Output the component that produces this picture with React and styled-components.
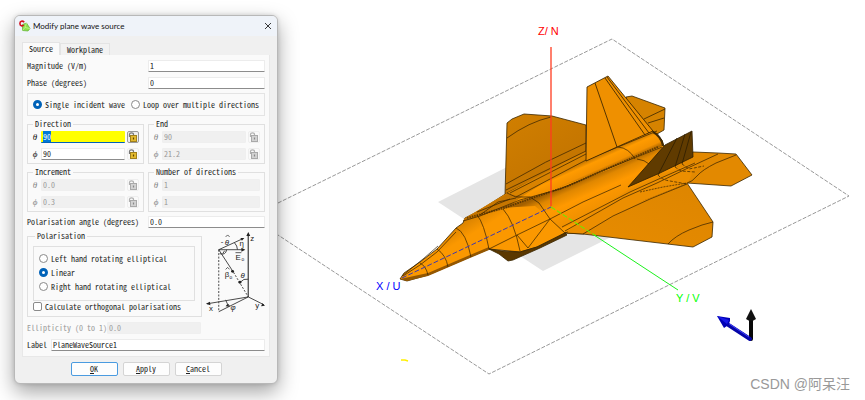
import React, { useEffect, useRef } from "react";
import styled, { createGlobalStyle, css } from "styled-components";

const mono = '"Noto Sans Mono CJK SC", "Liberation Mono", monospace';
const blue = "#0062b8";

const GlobalStyle = createGlobalStyle`
  *, *::before, *::after { box-sizing: border-box; }
  body { margin: 0; background: #fff; }
  button, input { font: inherit; color: inherit; margin: 0; }
`;

const Page = styled.main`
  display: flex;
  align-items: flex-start;
  position: relative;
  min-height: 100vh;
  overflow: hidden;
  font: 8px/8px ${mono};
  color: #222;
`;

const Dialog = styled.form`
  flex: 0 0 264px;
  margin: 15px 0 15px 14px;
  border: 1px solid #b8b8b8;
  border-radius: 6px;
  background: #f0f0f0;
  box-shadow: 0 8px 20px rgba(0, 0, 0, 0.36), 0 0 4px rgba(0, 0, 0, 0.14);
  z-index: 1;
`;

const TitleBar = styled.header`
  display: flex;
  align-items: center;
  gap: 2px;
  height: 20px;
  padding: 0 3px 0 4px;
  border-radius: 5px 5px 0 0;
  background: #eff3f9;
`;

const Title = styled.h1`
  flex: 1;
  margin: 0;
  font: 400 8px/12px Lato, sans-serif;
  color: #111;
`;

const CloseButton = styled.button`
  display: grid;
  place-items: center;
  width: 12px;
  height: 12px;
  padding: 0;
  border: 0;
  background: none;
`;

const Tabs = styled.div`
  display: flex;
  align-items: flex-end;
  padding: 6px 7px 0;
`;

const Tab = styled.button`
  height: ${(p) => (p.$active ? 13 : 12)}px;
  padding: 0 6px;
  border: 1px solid #e4e4e4;
  border-bottom: 0;
  background: ${(p) => (p.$active ? "#fafafa" : "#f2f2f2")};
`;

const Panel = styled.div`
  display: flex;
  flex-direction: column;
  gap: 4px;
  margin: 0 7px;
  padding: 5px 4px;
  border: 1px solid #e8e8e8;
  border-top: 0;
  background: #fafafa;
`;

const Stack = styled.div`
  display: flex;
  flex-direction: column;
  gap: 5px;
`;

const Columns = styled.div`
  display: grid;
  grid-template-columns: 1fr 1fr;
  gap: 4px;
`;

const FieldRow = styled.label`
  display: grid;
  grid-template-columns: ${(p) => p.$columns || "1fr 117px"};
  align-items: center;
  height: 12px;
  color: ${(p) => (p.$muted ? "#999" : "inherit")};
`;

const TextField = styled.input`
  width: 100%;
  min-width: 0;
  height: 12px;
  padding: 0 1px 2px;
  border: 1px solid #ececec;
  border-bottom-color: #8c8c8c;
  border-radius: 1px;
  background: #fff;
  outline: 0;
  &:disabled {
    border-color: #efefef;
    background: #f0f0f0;
    color: #999;
  }
  ${(p) =>
    p.$current &&
    css`
      border: 0;
      border-bottom: 1px solid ${blue};
      padding: 0 2px 1px;
      background: #ff0;
    `}
  &::selection {
    background: #0078d7;
    color: #fff;
  }
`;

const ChoiceBar = styled.div`
  display: flex;
  align-items: center;
  gap: 6px;
  height: 23px;
  padding: 0 5px;
  border: 1px solid #e4e4e4;
`;

const ChoiceBox = styled.div`
  display: flex;
  flex-direction: column;
  justify-content: center;
  gap: 5px;
  height: 55px;
  padding: 0 5px 2px;
  border: 1px solid #e0e0e0;
`;

const Choice = styled.label`
  display: flex;
  align-items: center;
  gap: 3px;
  height: 9px;
  white-space: nowrap;
`;

const Radio = styled.input.attrs({ type: "radio" })`
  appearance: none;
  flex: none;
  width: 9px;
  height: 9px;
  border: 1px solid #8a8a8a;
  border-radius: 50%;
  background: #fff;
  &:checked {
    border: 3px solid ${blue};
  }
`;

const Check = styled.input.attrs({ type: "checkbox" })`
  appearance: none;
  flex: none;
  width: 9px;
  height: 9px;
  border: 1px solid #8a8a8a;
  border-radius: 2px;
  background: #fff;
`;

const Group = styled.fieldset`
  min-width: 0;
  margin: 0;
  padding: ${(p) => (p.$roomy ? "6px 6px 5px 5px" : "3px 4px 3px 3px")};
  border: 1px solid #e0e0e0;
`;

const Legend = styled.legend`
  height: 8px;
  margin-left: 2px;
  padding: 0 2px;
`;

const AngleRow = styled.div`
  display: flex;
  align-items: center;
  gap: 2px;
  height: 12px;
`;

const Symbol = styled.label`
  flex: 0 0 8px;
  text-align: center;
  font: italic 9px/12px "Liberation Serif", serif;
  color: ${(p) => (p.$muted ? "#888" : "#111")};
`;

const LockButton = styled.button`
  display: grid;
  place-items: center;
  flex: 0 0 12px;
  height: 12px;
  padding: 0;
  border: 1px solid ${(p) => (p.$current ? "#999" : "#eee")};
  border-radius: 2px;
  background: ${(p) => (p.$current ? "#eee" : "none")};
`;

const PolarisationRow = styled.div`
  display: grid;
  grid-template-columns: 175px 1fr;
  gap: 2px;
  margin-bottom: 1px;
`;

const PolarChoices = styled.div`
  display: flex;
  flex-direction: column;
  gap: 1px;
`;

const Actions = styled.footer`
  display: flex;
  justify-content: center;
  gap: 5px;
  padding: 5px 0 7px;
`;

const ActionButton = styled.button`
  width: 47px;
  height: 14px;
  padding: 0;
  border: 1px solid ${(p) => (p.$primary ? "#4a9be0" : "#d4d4d4")};
  border-radius: 2px;
  background: #fdfdfd;
`;

const Scene = styled.svg`
  display: block;
  flex: 1 1 0;
  min-width: 0;
  height: auto;
`;

const Watermark = styled.span`
  position: absolute;
  right: 15px;
  bottom: 6px;
  z-index: 2;
  font: 14px/20px "Liberation Sans", "Noto Sans CJK SC", sans-serif;
  color: #999;
`;

function AppIcon() {
  return (
    <svg width="12" height="12" viewBox="0 0 12 12" aria-hidden="true">
      <path d="M3.5 4.5 7.5 3 11 8.500 9 11 3.500 10.500Z" fill="#8ee04a" stroke="#5fae35" strokeWidth=".7" />
      <path d="M7.500 3 6 7.500 11 8.500M6 7.500 3.500 10.500" fill="none" stroke="#c4f58f" strokeWidth=".8" />
      <path d="M5.200 2.300C3.500.3.900 1.100.900 3.500S3.500 6.600 4.700 4.900" fill="none" stroke="#d41420" strokeWidth="1.600" />
    </svg>
  );
}

function Lock({ muted }) {
  return (
    <svg width="10" height="10" viewBox="0 0 10 10" aria-hidden="true">
      <path d="M1.500 5V2.200Q1.500.8 3.500.8T5.500 2.500V4" fill="none" stroke={muted ? "#b0b0b0" : "#777"} strokeWidth="1.200" />
      <rect x="2.500" y="3.500" width="6" height="6" fill={muted ? "#d2d2d2" : "#e3b92e"} stroke={muted ? "#a9a9a9" : "#a0801c"} />
      <path d="M5.500 5.500v2" stroke={muted ? "#888" : "#5b4300"} strokeWidth="1.200" />
    </svg>
  );
}

function Angle({ name, symbol, value, disabled, lock = true, current }) {
  const ref = useRef(null);
  useEffect(() => {
    if (current) {
      ref.current.focus();
      ref.current.select();
    }
  }, [current]);
  return (
    <AngleRow>
      <Symbol htmlFor={name} $muted={disabled}>{symbol}</Symbol>
      <TextField id={name} ref={ref} defaultValue={value} disabled={disabled} $current={current} />
      {lock && (
        <LockButton type="button" aria-label={`Lock ${name}`} disabled={disabled} $current={current}>
          <Lock muted={disabled} />
        </LockButton>
      )}
    </AngleRow>
  );
}

function AngleGroup({ title, id, values, ...rest }) {
  return (
    <Group>
      <Legend>{title}</Legend>
      <Stack>
        <Angle name={`${id}-theta`} symbol="θ" value={values[0]} {...rest} />
        <Angle name={`${id}-phi`} symbol="ϕ" value={values[1]} {...rest} current={false} />
      </Stack>
    </Group>
  );
}

function WaveDiagram() {
  return (
    <svg width="100%" viewBox="203 235 62 84" aria-label="Plane wave angles">
      <g fill="none" stroke="#333" strokeWidth=".9">
        <path d="M248 301V237" stroke="#555" strokeWidth="1.400" />
        <path d="M218 253 242 242M218 253H243M218 253 233 276M248 301 206 308M248 301 264 309M248 301 218 316" />
        <path d="M233 276 248 301M218 253V316" strokeDasharray="2 1.500" />
        <path d="M234 246Q237 249 237 253M219 257Q225 259 226 253M222 257 224 254M240 286Q243 282 248 283M225 304Q226 308 229 310" />
      </g>
      <g fill="#222">
        <path d="m248 235 2 4h-4ZM244 241l-4 .2 1.500 2.800ZM245 253l-4-2v4ZM205 308l4-2 .5 3.500ZM265 310l-4 .4 1.400-3Z" />
        <circle cx="232" cy="275" r="1.500" />
        <circle cx="239.500" cy="286" r="1.500" />
        <path d="m229 311-4-.5 2-2.500Z" />
      </g>
      <g fill="#222" fontFamily="Liberation Sans" fontSize="8">
        <text x="250" y="244">z</text>
        <text x="220" y="247">-</text>
        <text x="224" y="248" fontStyle="italic">θ</text>
        <text x="239" y="249">η</text>
        <text x="235" y="263">E</text>
        <text x="241" y="264" fontSize="5">o</text>
        <text x="224" y="281">β</text>
        <text x="229" y="283" fontSize="5">o</text>
        <text x="240" y="282" fontStyle="italic">θ</text>
        <text x="208" y="315">x</text>
        <text x="230" y="314" fontStyle="italic">φ</text>
        <text x="255" y="312">y</text>
      </g>
      <path d="m225 240 2-2 2 2M225 273l2-2 2 2M235 256h6" fill="none" stroke="#333" strokeWidth=".8" />
    </svg>
  );
}

function AircraftScene() {
  return (
    <Scene viewBox="278 0 587 400" role="img" aria-label="Aircraft model with plane wave axes">
      <defs>
        <linearGradient id="farWing" x1="0" y1="0" x2=".6" y2="1">
          <stop offset="0" stopColor="#d17f00" />
          <stop offset="1" stopColor="#c07200" />
        </linearGradient>
        <linearGradient id="wing" x1="0" y1="1" x2="1" y2="0">
          <stop offset="0" stopColor="#e88c00" />
          <stop offset="1" stopColor="#dd8500" />
        </linearGradient>
        <linearGradient id="tube" gradientUnits="userSpaceOnUse" x1="598" y1="154" x2="606" y2="172">
          <stop offset="0" stopColor="#b56c00" />
          <stop offset=".3" stopColor="#ff9b00" />
          <stop offset=".7" stopColor="#f39100" />
          <stop offset="1" stopColor="#8b5200" />
        </linearGradient>
        <linearGradient id="back" gradientUnits="userSpaceOnUse" x1="590" y1="175" x2="604" y2="207">
          <stop offset="0" stopColor="#a36000" />
          <stop offset=".2" stopColor="#e08700" />
          <stop offset=".5" stopColor="#ff9900" />
          <stop offset="1" stopColor="#f09000" />
        </linearGradient>
        <linearGradient id="nose" gradientUnits="userSpaceOnUse" x1="448" y1="232" x2="466" y2="262">
          <stop offset="0" stopColor="#dc8400" />
          <stop offset=".4" stopColor="#fb9800" />
          <stop offset="1" stopColor="#fb9800" />
        </linearGradient>
      </defs>

      <path d="M438 202 543 271 665 210 560 140Z" fill="#e5e5e5" />
      <path d="M278 203 612 39 849 196 489 374 278 235" fill="none" stroke="#999" strokeDasharray="4 1.500" />

      <g stroke="#3a2600" strokeWidth=".8" strokeLinejoin="round">
        <path d="M505 195 507 123 512 119 524 114 552 116 586 125V162L530 200Z" fill="url(#farWing)" />
        <path d="M626 97 632 96 665 108 664 130 650 138 630 130Z" fill="#d68300" />
        <path d="M644 119 665 109M648 123 664 118" />
        <path d="M693 152 718 153 736 154 752 175 731 186 687 183 650 187 672 165Z" fill="#e38900" />
        <path d="M400 279 404 273 420 262 437 249 456 228 463 223 465 218 477 212 507 193 586 154 653 131 662 140 664 146 687 183 640 212 583 234 565 233 537 247 520 252 489 249 470 257 428 275 407 281Z" fill="url(#nose)" />
      </g>
      <path d="M507 193 586 151 586 160 545 182 510 206 467 217Z" fill="#d98300" />
      <path d="M465 218 507 194 528 197 512 207 489 213 463 221Z" fill="#c67600" />
      <path d="M510 205Q545 180 586 160L653 132Q660 135 662 146L610 168 560 187 500 208Z" fill="url(#tube)" />
      <path d="M500 208 560 188 610 169 662 147 680 170 600 213 560 229 550 219 535 206Z" fill="url(#back)" />
      <g stroke="#3a2600" strokeWidth=".8" strokeLinejoin="round">
        <path d="M489 249 502 251 520 252 537 247 565 233 567 235 540 248 513 260 508 261 499 254Z" fill="#5b3800" />
        <path d="M400 279 428 273 470 255 489 247 489 250 470 258 428 276 407 281Z" fill="#945700" stroke="none" />
        <path d="M687 183 713 222 712 237 693 247 583 234 565 233 620 209Z" fill="url(#wing)" />
      </g>
      <path d="M580 221 628 190 661 174 697 162 688 183 645 200 583 233 567 232Z" fill="#ec8e00" />

      <g fill="none" stroke="#2d1d00" strokeWidth=".8" opacity=".85">
        <path d="M507 138Q529 122 551 117M506 184Q545 161 586 143M506 190 586 151M510 193 586 154M516 197Q550 179 586 160" />
        <path d="M736 155 716 163Q702 170 697 176T687 183M718 154 690 167 657 183 623 198 565 231M695 163 661 178 630 192 562 227" />
        <path d="M583 234 613 216 650 199 687 184M668 244Q675 236 689 230T713 222" />
        <path d="M658 175Q662 180 670 181L687 184M675 167 681 171 695 172M682 164 689 169 704 166" strokeDasharray="3 1.500" />
        <path d="M618 147Q629 148 635 159M637 159Q645 160 649 164" />
        <path d="M420 263Q426 266 428 275M437 249Q446 255 448 267M456 228Q466 232 471 257M477 215Q484 223 489 249M503 209Q514 221 520 251M507 193 516 197 530 197 539 203 550 219 565 233M517 235 528 248 550 219" />
        <path d="M489 249 517 235 550 219 583 202 621 185M403 276 420 265 437 252 456 232M402 276 423 259 438 246M477 212 510 199M480 215 498 202 516 198" />
        <path d="M586 160 657 131M463 221 480 216 520 200 560 189 602 171 662 147" />
        <path d="M467 218 504 208 535 197 568 186 604 170 658 147" strokeWidth="2" strokeDasharray="1.500 1" opacity=".7" />
        <path d="M640 192 663 187 687 183" strokeDasharray="2 1" />
        <path d="M653 132Q661 136 663 146" strokeWidth="2" />
      </g>

      <g stroke="#2d1d00" strokeWidth=".8" strokeLinejoin="round">
        <path d="M628 187 665 145 692 131 693 157 660 173Z" fill="#603b00" />
        <path d="M658 175 677 138M675 167 685 134M682 164 691 132" />
        <path d="M586 161 587 87 608 76 653 131 617 147Z" fill="#ef9000" />
        <path d="M595 83 617 147M605 78 645 135M607 77 649 133" />
      </g>

      <path d="M551 47V206" stroke="#ff3b20" strokeWidth="1.300" />
      <path d="M402 278 551 207" stroke="#3c38b0" strokeDasharray="5 2" />
      <path d="M551 207 596 236" stroke="#7be000" strokeDasharray="5 2" strokeWidth="1.200" />
      <path d="M594 235 678 290" stroke="#1cf01c" />
      <path d="M401 360h4l3 1" fill="none" stroke="#fff000" strokeWidth="1.500" />

      <g fontFamily="Liberation Sans" fontSize="11">
        <text x="538" y="35" fill="#f00">Z/ N</text>
        <text x="376" y="290" fill="#00f">X / U</text>
        <text x="676" y="302" fill="#0f0">Y / V</text>
      </g>

      <path d="M751 339V319" stroke="#080808" strokeWidth="4" strokeLinecap="round" />
      <path d="M751 309 756 319Q751 323 746 319Z" fill="#111" />
      <path d="M750 339 727 324" stroke="#0505a8" strokeWidth="4" strokeLinecap="round" />
      <path d="M749 337 728 323" stroke="#4242ff" />
      <path d="M717 316 730 318Q731 324 724 328Z" fill="#0000b5" />
      <path d="M717 316 729 320 727 324Z" fill="#1818e8" />
    </Scene>
  );
}

export default function App() {
  return (
    <>
      <GlobalStyle />
      <Page>
        <Dialog role="dialog" aria-labelledby="dialog-title" onSubmit={(e) => e.preventDefault()}>
          <TitleBar>
            <AppIcon />
            <Title id="dialog-title">Modify plane wave source</Title>
            <CloseButton type="button" aria-label="Close">
              <svg width="8" height="8" viewBox="0 0 8 8">
                <path d="m1 1 6 6M7 1 1 7" stroke="#222" strokeWidth=".9" />
              </svg>
            </CloseButton>
          </TitleBar>
          <Tabs role="tablist">
            <Tab type="button" role="tab" aria-selected="true" $active>Source</Tab>
            <Tab type="button" role="tab" aria-selected="false">Workplane</Tab>
          </Tabs>
          <Panel role="tabpanel">
            <Stack>
              <FieldRow>Magnitude (V/m)<TextField defaultValue="1" /></FieldRow>
              <FieldRow>Phase (degrees)<TextField defaultValue="0" /></FieldRow>
            </Stack>
            <ChoiceBar>
              <Choice><Radio name="mode" defaultChecked />Single incident wave</Choice>
              <Choice><Radio name="mode" />Loop over multiple directions</Choice>
            </ChoiceBar>
            <Columns>
              <AngleGroup title="Direction" id="direction" values={["90", "90"]} current />
              <AngleGroup title="End" id="end" values={["90", "21.2"]} disabled />
              <AngleGroup title="Increment" id="increment" values={["0.0", "0.3"]} disabled />
              <AngleGroup title="Number of directions" id="number" values={["1", "1"]} disabled lock={false} />
            </Columns>
            <FieldRow>Polarisation angle (degrees)<TextField defaultValue="0.0" /></FieldRow>
            <PolarisationRow>
              <Group $roomy>
                <Legend>Polarisation</Legend>
                <PolarChoices>
                  <ChoiceBox>
                    <Choice><Radio name="polarisation" />Left hand rotating elliptical</Choice>
                    <Choice><Radio name="polarisation" defaultChecked />Linear</Choice>
                    <Choice><Radio name="polarisation" />Right hand rotating elliptical</Choice>
                  </ChoiceBox>
                  <Choice><Check />Calculate orthogonal polarisations</Choice>
                </PolarChoices>
              </Group>
              <WaveDiagram />
            </PolarisationRow>
            <Stack>
              <FieldRow $muted $columns="80px 94px">Ellipticity (0 to 1)<TextField defaultValue="0.0" disabled /></FieldRow>
              <FieldRow $columns="24px 1fr">Label<TextField defaultValue="PlaneWaveSource1" /></FieldRow>
            </Stack>
          </Panel>
          <Actions>
            <ActionButton type="submit" $primary><u>O</u>K</ActionButton>
            <ActionButton type="button"><u>A</u>pply</ActionButton>
            <ActionButton type="button"><u>C</u>ancel</ActionButton>
          </Actions>
        </Dialog>
        <AircraftScene />
        <Watermark>CSDN @阿呆汪</Watermark>
      </Page>
    </>
  );
}
